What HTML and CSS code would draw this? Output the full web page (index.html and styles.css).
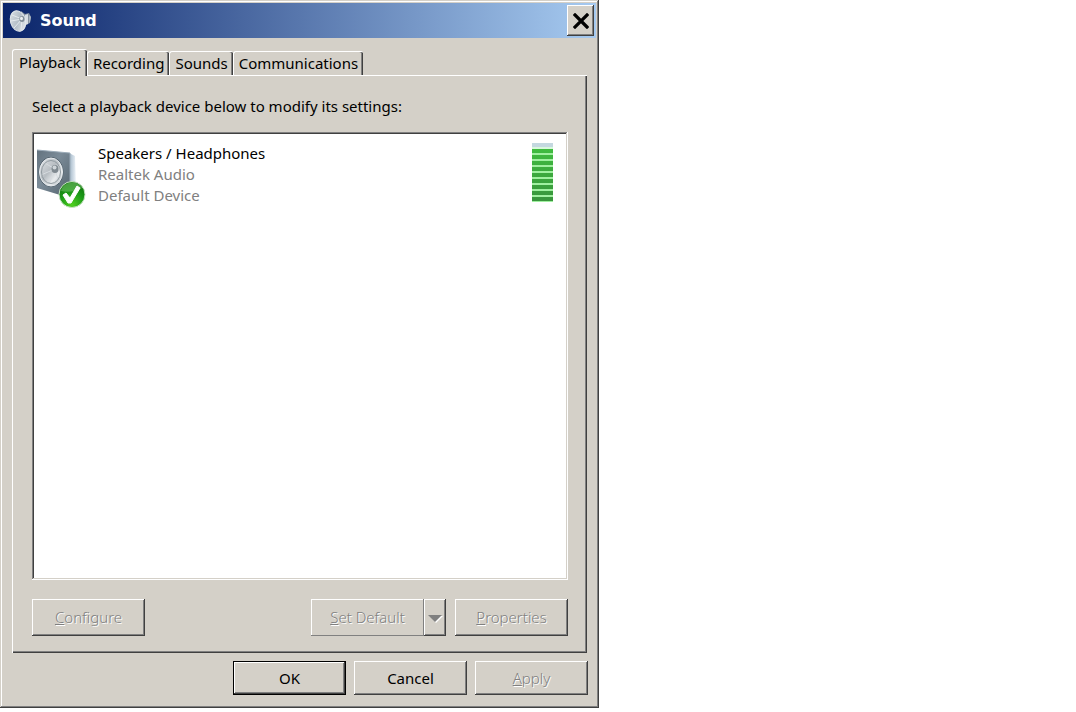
FILE: index.html
```html
<!DOCTYPE html>
<html lang="en">
  <head>
    <meta charset="utf-8" />
    <title>Sound</title>
    <meta name="viewport" content="width=device-width, initial-scale=1" />
    <link rel="stylesheet" href="styles.css">
  </head>

  <body>
    <main class="window">
      <header class="titlebar">
        <svg class="titlebar-icon" viewBox="0 0 24 24" aria-hidden="true">
          <defs>
            <linearGradient id="cone" x1="0" y1="0" x2="1" y2="1">
              <stop offset="0" stop-color="#dfe4e8" />
              <stop offset="0.5" stop-color="#b4bec7" />
              <stop offset="1" stop-color="#f0f3f5" />
            </linearGradient>
          </defs>
          <path d="M12 2l4 3 4-1 2 4-1 6-4 2-3 5z" fill="#8591a0" />
          <path d="M16 6l3-1v10l-3 1z" fill="#d8dee4" />
          <path d="M20 6l2 2-1 5-1 1z" fill="#aab5c0" />
          <ellipse cx="9" cy="12" rx="7.5" ry="10.5" transform="rotate(-16 9 12)" fill="url(#cone)" stroke="#e3e8ec" />
          <path d="M13 10L3 6M13 10L2 12M13 10L5 19M13 10L12 21" stroke="#e4e9ed" />
          <ellipse cx="13" cy="10" rx="2.6" ry="3" fill="#7f8b96" />
          <ellipse cx="12.5" cy="9.5" rx="1.5" ry="1.8" fill="#edf0f2" />
        </svg>
        <h1 class="titlebar-text">Sound</h1>
        <button class="close-button" type="button" aria-label="Close">
          <svg viewBox="0 0 16 16" aria-hidden="true">
            <path d="M2 2l12 12M14 2L2 14" stroke="#000" stroke-width="3.2" stroke-linecap="square" />
          </svg>
        </button>
      </header>

      <div class="window-body">
        <div class="tabs" role="tablist">
          <button class="tab tab-active" type="button" role="tab" id="tab-playback" aria-selected="true" aria-controls="playback">Playback</button>
          <button class="tab" type="button" role="tab" aria-selected="false">Recording</button>
          <button class="tab" type="button" role="tab" aria-selected="false">Sounds</button>
          <button class="tab" type="button" role="tab" aria-selected="false">Communications</button>
        </div>

        <section class="tab-page" id="playback" role="tabpanel" aria-labelledby="tab-playback">
          <p class="hint" id="hint">Select a playback device below to modify its settings:</p>

          <ul class="devices" aria-labelledby="hint">
            <li class="device">
              <svg class="device-icon" viewBox="0 0 50 60" aria-hidden="true">
                <defs>
                  <linearGradient id="front" x1="0" y1="0" x2="1" y2="1">
                    <stop offset="0" stop-color="#63727e" />
                    <stop offset="0.4" stop-color="#7b8b98" />
                    <stop offset="1" stop-color="#52616c" />
                  </linearGradient>
                  <linearGradient id="side" x1="0" y1="0" x2="1" y2="0">
                    <stop offset="0" stop-color="#9db2c4" />
                    <stop offset="1" stop-color="#eef4f9" />
                  </linearGradient>
                  <linearGradient id="dish" x1="0" y1="0" x2="1" y2="1">
                    <stop offset="0" stop-color="#e3e6e9" />
                    <stop offset="0.45" stop-color="#b7bdc2" />
                    <stop offset="0.7" stop-color="#e9ecee" />
                    <stop offset="1" stop-color="#a5aeb4" />
                  </linearGradient>
                  <radialGradient id="badge" cx="0.5" cy="0.9" r="0.8">
                    <stop offset="0" stop-color="#4fd01f" />
                    <stop offset="0.6" stop-color="#1c9a18" />
                    <stop offset="1" stop-color="#12780f" />
                  </radialGradient>
                </defs>
                <path d="M32 5l6 3 1 28-7 10z" fill="url(#side)" />
                <path d="M0 2l33 3v45L0 40z" fill="url(#front)" />
                <path d="M0 2l33 3v35" fill="none" stroke="#9babb8" />
                <ellipse cx="14" cy="24" rx="12.5" ry="15" fill="#4f5d68" />
                <ellipse cx="14" cy="24" rx="11.5" ry="14" fill="url(#dish)" stroke="#e8edf1" />
                <path d="M18 21L6 14M18 21L4 27M18 21L12 36M18 21L22 35" stroke="#d6dbdf" />
                <ellipse cx="14" cy="24" rx="9.500" ry="11.500" fill="none" stroke="#8f999f" />
                <ellipse cx="18" cy="21" rx="3.500" ry="4" fill="#7f8990" />
                <circle cx="17.500" cy="19.500" r="2" fill="#cfd5d9" />
                <circle cx="35" cy="46.500" r="13" fill="url(#badge)" stroke="#c9e3c5" />
                <path d="M24 43a11.500 11.500 0 0 1 21-3c-6 3-14 5-21 3z" fill="#7dcc72" opacity="0.5" />
                <path d="M26 47l3-2 4 5 7-12 3 2-9 15h-3z" fill="#fff" stroke="#fff" stroke-linejoin="round" />
              </svg>
              <div class="device-text">
                <p class="device-name">Speakers / Headphones</p>
                <p>Realtek Audio</p>
                <p>Default Device</p>
              </div>
              <div class="level" role="meter" aria-label="Level" aria-valuemin="0" aria-valuemax="10" aria-valuenow="9"></div>
            </li>
          </ul>

          <div class="actions">
            <button class="button button-tall" type="button" disabled><span><u>C</u>onfigure</span></button>
            <div class="split">
              <button class="button button-tall split-main" type="button" disabled><span><u>S</u>et Default</span></button>
              <button class="button button-tall split-arrow" type="button" aria-label="More defaults" disabled>
                <svg viewBox="0 0 15 9" aria-hidden="true">
                  <path d="M2 2h13L8 9z" fill="#fff" />
                  <path d="M0 1h14L7 8z" fill="#808080" />
                </svg>
              </button>
            </div>
            <button class="button button-tall" type="button" disabled><span><u>P</u>roperties</span></button>
          </div>
        </section>

        <footer class="dialog-buttons">
          <button class="button button-default" type="button">OK</button>
          <button class="button" type="button">Cancel</button>
          <button class="button" type="button" disabled><span><u>A</u>pply</span></button>
        </footer>
      </div>
    </main>
  </body>
</html>
```
FILE: styles.css
```css
* {
  box-sizing: border-box;
}

body {
  margin: 0;
  background: #fff;
  color: #000;
  font-family: "Noto Sans", "Open Sans", sans-serif;
  font-size: 15px;
  line-height: 21px;
}

p,
h1,
ul {
  margin: 0;
  padding: 0;
}

button {
  padding: 0;
  border: 0;
  background: #d4d0c8;
  color: #000;
  font: inherit;
}

.window {
  width: 100%;
  max-width: 599px;
  padding: 3px;
  background: #d4d0c8;
  box-shadow: inset -1px -1px #404040, inset 1px 1px #d4d0c8,
    inset -2px -2px #808080, inset 2px 2px #fff;
}

.titlebar {
  display: flex;
  align-items: center;
  height: 35px;
  padding: 0 2px 0 6px;
  background: linear-gradient(to right, #0a246a, #a6caf0);
}

.titlebar-icon {
  width: 24px;
  height: 24px;
}

.titlebar-text {
  flex: 1;
  margin-left: 7px;
  color: #fff;
  font-family: "DejaVu Sans", Verdana, sans-serif;
  font-size: 16px;
  font-weight: bold;
}

.close-button {
  display: flex;
  align-items: center;
  justify-content: center;
  width: 27px;
  height: 31px;
  box-shadow: inset -1px -1px #404040, inset 1px 1px #fff,
    inset -2px -2px #808080;
}

.close-button svg {
  width: 16px;
  height: 16px;
}

.window-body {
  padding: 11px 8px 10px 9px;
}

.tabs {
  display: flex;
  align-items: flex-end;
}

.tab {
  height: 24px;
  padding: 0 5px;
  border-top: 1px solid #fff;
  border-left: 1px solid #fff;
  border-radius: 3px 2px 0 0;
  box-shadow: inset -1px 0 #404040, inset -2px 0 #808080;
}

/* the selected tab covers the top edge of the page below it */
.tab-active {
  position: relative;
  height: 27px;
  margin-bottom: -1px;
  padding: 0 6px 2px;
}

.tab-page {
  margin-right: 1px;
  padding: 20px 19px 17px;
  border-top: 1px solid #fff;
  border-left: 1px solid #fff;
  box-shadow: inset -1px -1px #404040, inset -2px -2px #808080;
}

.hint {
  margin-bottom: 15px;
}

.devices {
  min-height: 448px;
  padding: 11px 15px 2px 5px;
  background: #fff;
  box-shadow: inset -1px -1px #fff, inset 1px 1px #808080,
    inset -2px -2px #d4d0c8, inset 2px 2px #404040;
  list-style: none;
}

.device {
  display: flex;
  align-items: flex-start;
}

.device-icon {
  flex: none;
  width: 50px;
  height: 60px;
  margin-top: 5px;
}

.device-text {
  flex: 1;
  margin-left: 11px;
  color: #808080;
}

.device-name {
  color: #000;
}

.level {
  width: 21px;
  height: 59px;
  background: linear-gradient(#c4d8e0 4px, #d8f8dc 4px 6px, transparent 6px),
    repeating-linear-gradient(transparent 0 4px, #a0f0a0 4px 6px),
    linear-gradient(#40c040, #38943c);
}

.actions {
  display: flex;
  gap: 9px;
  margin-top: 19px;
}

.split {
  display: flex;
  margin-left: auto;
}

.button {
  width: 113px;
  height: 34px;
  box-shadow: inset -1px -1px #404040, inset 1px 1px #fff,
    inset -2px -2px #808080;
}

.button-tall {
  height: 37px;
}

.button-default {
  border: 1px solid #000;
}

.button:disabled {
  color: #808080;
  font-weight: 300;
  text-shadow: 1px 1px #fff;
}

.split-main {
  box-shadow: inset -1px -1px #808080, inset 1px 1px #fff;
}

.split-arrow {
  width: 22px;
}

.split-arrow svg {
  width: 15px;
  height: 9px;
}

.dialog-buttons {
  display: flex;
  justify-content: flex-end;
  gap: 8px;
  margin-top: 8px;
}
```
